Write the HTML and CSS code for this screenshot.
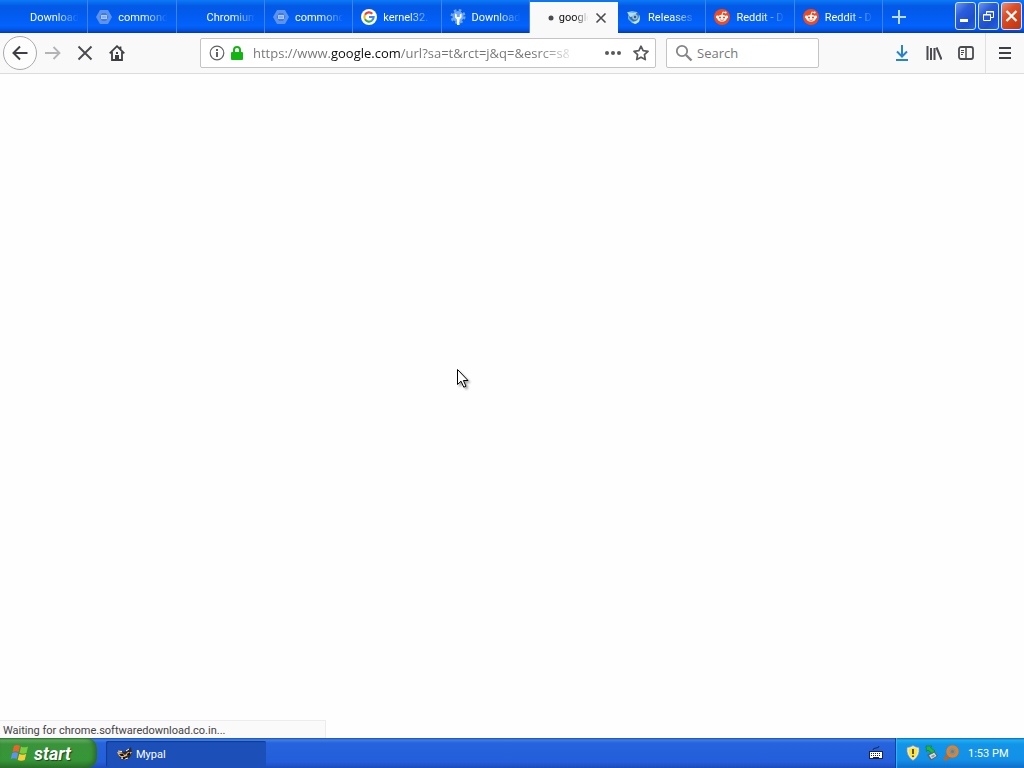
FILE: index.html
```html
<!DOCTYPE html>
<html lang="en">
<head>
  <meta charset="UTF-8">
  <meta name="viewport" content="width=device-width, initial-scale=1.0">
  <title>Mypal</title>
  <link rel="stylesheet" href="styles.css">
</head>
<body>
  <svg class="defs" aria-hidden="true">
    <symbol id="hexagon" viewBox="0 0 16 16">
      <path d="M4 1h8l4 7-4 7H4L0 8z" fill="#5c93ee"/>
      <path d="M6 4h4l2.500 4L10 12H6L3.500 8z" fill="#4379dd"/>
      <path d="M5 6h6v4H5z" fill="#a9c9fb"/>
      <path d="M6 8h4" stroke="#5c8fe8"/>
    </symbol>
    <symbol id="reddit" viewBox="0 0 16 16">
      <circle cx="8" cy="8" r="8" fill="#f04a20"/>
      <circle cx="3.300" cy="8" r="1.400" fill="#fff"/>
      <circle cx="12.700" cy="8" r="1.400" fill="#fff"/>
      <ellipse cx="8" cy="9.200" rx="4.800" ry="3.500" fill="#fff"/>
      <path d="M8 6l.800-3 2.600.600" fill="none" stroke="#fff" stroke-width=".9"/>
      <circle cx="11.600" cy="3.600" r="1" fill="#fff"/>
      <circle cx="6" cy="8.500" r="1.100" fill="#f04a20"/>
      <circle cx="10" cy="8.500" r="1.100" fill="#f04a20"/>
      <path d="M6 10.800q2 1.200 4 0" fill="none" stroke="#f04a20" stroke-width=".8"/>
    </symbol>
  </svg>

  <header class="titlebar">
    <div class="tabs" role="tablist">
      <button class="tab" role="tab"><span class="favicon"></span><span class="label">Download</span></button>
      <button class="tab" role="tab"><svg class="favicon"><use href="#hexagon"/></svg><span class="label">commond</span></button>
      <button class="tab" role="tab"><span class="favicon"></span><span class="label">Chromium</span></button>
      <button class="tab" role="tab"><svg class="favicon"><use href="#hexagon"/></svg><span class="label">commond</span></button>
      <button class="tab" role="tab">
        <svg class="favicon" viewBox="0 0 16 16">
          <circle cx="8" cy="8" r="8" fill="#fff"/>
          <g fill="none" stroke-width="2.200">
            <path d="M11.300 4.700A4.600 4.600 0 0 0 4 5.700" stroke="#ea4335"/>
            <path d="M4 5.700a4.600 4.600 0 0 0 0 4.600" stroke="#fbbc05"/>
            <path d="M4 10.300a4.600 4.600 0 0 0 7 1.200" stroke="#34a853"/>
            <path d="M11 11.500A4.600 4.600 0 0 0 12.600 8H8" stroke="#4285f4"/>
          </g>
        </svg>
        <span class="label">kernel32.</span>
      </button>
      <button class="tab" role="tab">
        <svg class="favicon" viewBox="0 0 16 16">
          <circle cx="8" cy="7.500" r="5.500" fill="#6fa8f5"/>
          <circle cx="8" cy="7.500" r="6.400" fill="none" stroke="#6fa8f5" stroke-width="2.200" stroke-dasharray="2.600 2.430"/>
          <path d="M5 4.500v4l2 2V16h2.500v-5.500l2-2v-4L9.800 5.500V8h-3V5.500z" fill="#fff"/>
        </svg>
        <span class="label">Download</span>
      </button>
      <button class="tab selected" role="tab" aria-selected="true">
        <svg class="favicon" viewBox="0 0 16 16"><circle cx="13" cy="8" r="2.500" fill="#4a4a4f"/></svg>
        <span class="label">google</span>
        <svg class="close" viewBox="0 0 12 12"><path d="M1.500 1.500l9 9M10.500 1.500l-9 9" stroke="#4a4a4f" stroke-width="1.600"/></svg>
      </button>
      <button class="tab" role="tab">
        <svg class="favicon" viewBox="0 0 16 16">
          <path d="M2 3l4-1 5 1 3 4v4l-4 4-4-1-4-4z" fill="#63b7e6"/>
          <path d="M1 3l5 3 4-3 3 2-1 5-4 3-4-3z" fill="#3d6f9f"/>
          <path d="M1 3l6 1 4-1-2 4-5 1z" fill="#b5def2"/>
          <circle cx="9" cy="8" r="2.800" fill="#8fc3ea"/>
          <circle cx="9" cy="8" r="1.200" fill="#385974"/>
          <path d="M6 13l5-1 3-5-1 6-4 2z" fill="#cbe6dc"/>
        </svg>
        <span class="label">Releases</span>
      </button>
      <button class="tab" role="tab"><svg class="favicon"><use href="#reddit"/></svg><span class="label">Reddit - D</span></button>
      <button class="tab" role="tab"><svg class="favicon"><use href="#reddit"/></svg><span class="label">Reddit - D</span></button>
    </div>
    <button class="new-tab" aria-label="New tab">
      <svg width="14" height="14" viewBox="0 0 14 14"><path d="M7 0v14M0 7h14" stroke="#bcdcff" stroke-width="2"/></svg>
    </button>
    <div class="window-buttons">
      <button class="window-button" aria-label="Minimize">
        <svg width="19" height="26" viewBox="0 0 19 26"><path d="M4 16h8v3H4z" fill="#fff"/></svg>
      </button>
      <button class="window-button" aria-label="Restore">
        <svg width="19" height="26" viewBox="0 0 19 26" fill="none" stroke="#fff">
          <path d="M7.500 11V8.500h7v6H12M7 9h8"/><path d="M4.500 11.500h7v6h-7zM4 12h8"/>
        </svg>
      </button>
      <button class="window-button window-close" aria-label="Close">
        <svg width="19" height="26" viewBox="0 0 19 26"><path d="M4.500 8l10 10M14.500 8l-10 10" stroke="#fff" stroke-width="2.200"/></svg>
      </button>
    </div>
  </header>

  <nav class="toolbar">
    <button class="back" aria-label="Back">
      <svg width="16" height="16" viewBox="0 0 16 16"><path d="M15.500 8H1.500M8 1.500L1.500 8 8 14.500" fill="none" stroke="#3f3f43" stroke-width="2"/></svg>
    </button>
    <button class="tool" aria-label="Forward">
      <svg width="16" height="16" viewBox="0 0 16 16"><path d="M0 8h14.500M8.500 2l6 6-6 6" fill="none" stroke="#b4b4b6" stroke-width="1.800"/></svg>
    </button>
    <button class="tool" aria-label="Stop">
      <svg width="16" height="16" viewBox="0 0 16 16"><path d="M1.500 1.500l13 13M14.500 1.500l-13 13" stroke="#4a4a4f" stroke-width="1.900"/></svg>
    </button>
    <button class="tool" aria-label="Home">
      <svg width="16" height="16" viewBox="0 0 16 16">
        <path d="M.700 8.300L8 1.200l7.300 7.100M3 7v8h10V7M11.500 1.500v3" fill="none" stroke="#3f3f43" stroke-width="1.800"/>
        <path d="M6 15v-5h4v5z" fill="#3f3f43"/><path d="M7 7h2v2H7z" fill="#3f3f43"/>
      </svg>
    </button>
    <span class="spring"></span>
    <div class="urlbar">
      <svg width="16" height="16" viewBox="0 0 16 16">
        <circle cx="8" cy="8" r="6.800" fill="none" stroke="#626266" stroke-width="1.200"/>
        <path d="M7 7h2v5H7zM7 4h2v2H7z" fill="#626266"/>
      </svg>
      <svg width="16" height="16" viewBox="0 0 16 16">
        <path d="M5 8V5a3 3 0 0 1 6 0v3" fill="none" stroke="#12b512" stroke-width="2"/>
        <rect x="2" y="7" width="12" height="8" rx="1" fill="#12b512"/>
      </svg>
      <input class="url" type="text" aria-label="Address" value="https://www.google.com/url?sa=t&amp;rct=j&amp;q=&amp;esrc=s&amp;">
      <button class="url-action" aria-label="Page actions">
        <svg width="16" height="16" viewBox="0 0 16 16" fill="#59595d"><circle cx="2" cy="8" r="2"/><circle cx="8" cy="8" r="2"/><circle cx="14" cy="8" r="2"/></svg>
      </button>
      <button class="url-action" aria-label="Bookmark this page">
        <svg width="16" height="16" viewBox="0 0 16 16"><path d="M8 1.200l2.100 4.500 4.900.600-3.600 3.400.900 4.900L8 12.200l-4.300 2.400.900-4.900L1 6.300l4.900-.600z" fill="none" stroke="#59595d" stroke-width="1.700" stroke-linejoin="round"/></svg>
      </button>
    </div>
    <div class="searchbar">
      <svg width="18" height="18" viewBox="0 0 18 18"><path d="M11 11l5.500 5.500" stroke="#858588" stroke-width="2.400"/><circle cx="7" cy="7" r="5.200" fill="none" stroke="#858588" stroke-width="1.800"/></svg>
      <input class="search" type="text" aria-label="Search" placeholder="Search">
    </div>
    <span class="spring"></span>
    <button class="tool" aria-label="Downloads">
      <svg width="16" height="16" viewBox="0 0 16 16"><path d="M8 0v11M3 6.500l5 5 5-5M2 15h12" fill="none" stroke="#2783cd" stroke-width="2"/></svg>
    </button>
    <button class="tool" aria-label="Library">
      <svg width="16" height="16" viewBox="0 0 16 16"><path d="M1.500 1v14M5 3v12M8.500 3v12M10.500 2.500l5 12" stroke="#4a4a4f" stroke-width="2"/></svg>
    </button>
    <button class="tool" aria-label="Sidebars">
      <svg width="16" height="16" viewBox="0 0 16 16"><rect x="1" y="2" width="14" height="12" rx="2" fill="none" stroke="#4a4a4f" stroke-width="1.800"/><path d="M8 2v12" stroke="#4a4a4f" stroke-width="1.500"/><path d="M3 5.500h3M3 7.500h3M3 9.500h2" stroke="#4a4a4f"/></svg>
    </button>
    <button class="tool menu" aria-label="Open menu">
      <svg width="16" height="16" viewBox="0 0 16 16"><path d="M2 3h12M2 8h12M2 13h12" stroke="#3f3f43" stroke-width="2"/></svg>
    </button>
  </nav>

  <main class="page">
    <svg class="cursor" width="15" height="22" viewBox="0 0 15 22">
      <path d="M1.500 1.500v15l3.500-3.300 2.800 6 2.200-1-2.600-5.700h4.600z" fill="#fff" stroke="#000"/>
    </svg>
    <div class="status">Waiting for chrome.softwaredownload.co.in...</div>
  </main>

  <footer class="taskbar">
    <button class="start">
      <svg width="20" height="18" viewBox="0 0 20 18">
        <path d="M4 2q3-2 6 0L8.500 8q-3-1.500-6 0z" fill="#f0602c"/>
        <path d="M11 2.500q3 1.700 7 0L16.500 9q-3.500 1.500-7 0z" fill="#7ccc3e"/>
        <path d="M2.200 9.200q3-1.700 6 0L6.700 15q-3-1.700-6 0z" fill="#5b92f4"/>
        <path d="M9.200 10q3.500 1.600 7 0L14.700 16q-3.500 1.600-7 0z" fill="#f9cf38"/>
      </svg>
      <span>start</span>
    </button>
    <button class="task">
      <svg width="16" height="16" viewBox="0 0 16 16">
        <path d="M1 4l3 1 3 1 4-2 3-3 1 6-2 4-4 3-5-1-3-4z" fill="#312821"/>
        <path d="M0 6l5 .500L8 9l3-3 4 0-2 3-4 1-3 2-4-2z" fill="#e7b983"/>
        <path d="M2 8l4-.500L7 10H4zM10 8l3-2 .500 3-3 1z" fill="#18120f"/>
        <path d="M1 5l4 .500M9 5l3-2M4 12l4 1 3-1" stroke="#fff"/>
        <circle cx="7" cy="12" r="1.200" fill="#111"/>
      </svg>
      <span>Mypal</span>
    </button>
    <button class="keyboard" aria-label="On-screen keyboard">
      <svg width="14" height="14" viewBox="0 0 14 14">
        <path d="M4 4q0-2 3-2t3-2" fill="none" stroke="#12265c"/>
        <rect x=".5" y="5.500" width="13" height="7" fill="#fff" stroke="#17224c"/>
        <path d="M2 7.500h10M2 9.500h10" stroke="#222" stroke-dasharray="1 1"/><path d="M4 11.500h6" stroke="#222"/>
      </svg>
    </button>
    <div class="tray">
      <svg width="16" height="16" viewBox="0 0 16 16">
        <path d="M8 .500q3 2 6 2Q15 11 8 15.500 1 11 2 2.500q3 0 6-2z" fill="#e9eef0" stroke="#8b959a" stroke-width=".7"/>
        <path d="M8 2.200q2 1.300 4.500 1.600Q13 10.500 8 13.800 3 10.500 3.500 3.800 6 3.500 8 2.200z" fill="#ffe337"/>
        <path d="M8 4v5M8 10.500v1.500" stroke="#372e00" stroke-width="1.600"/>
      </svg>
      <svg width="16" height="16" viewBox="0 0 16 16">
        <path d="M3 10l7-4 4 5-7 4.500z" fill="#56666c"/>
        <path d="M5 10.500l5-3 2.500 3.500-5 3z" fill="#d8e0e2"/>
        <path d="M7 11l3-1.500 1 1.500-3 1.500z" fill="#8a999c"/>
        <path d="M2 1l6 0-1.500 1.500L11 6 8 8.500 4 5 2.500 6.500z" fill="#22b83b" stroke="#11752b" stroke-width=".6"/>
      </svg>
      <svg width="16" height="16" viewBox="0 0 16 16">
        <path d="M6 10l-4.500 5" stroke="#c4631a" stroke-width="3.400"/>
        <circle cx="9.500" cy="6.500" r="4.700" fill="#4f9fcc" stroke="#ee7d1b" stroke-width="3"/>
        <circle cx="9.500" cy="6.500" r="1.500" fill="#b76429"/>
      </svg>
      <time class="clock">1:53 PM</time>
    </div>
  </footer>
</body>
</html>
```
FILE: styles.css
```css
* {
  box-sizing: border-box;
}

body {
  display: flex;
  flex-direction: column;
  min-height: 100vh;
  margin: 0;
  background-color: #fff;
  font-family: Roboto, "Noto Sans", sans-serif;
  font-size: 11px;
}

button {
  padding: 0;
  border: none;
  background: none;
  font-family: inherit;
  font-size: inherit;
}

svg {
  flex: none;
}

.defs {
  position: absolute;
  width: 0;
  height: 0;
}

/* title bar */
.titlebar {
  display: flex;
  height: 33px;
  background: linear-gradient(#0b7af5 0, #0870f2 2px, #0459e4 6px, #025bef 14px, #0263fc 26px, #0253e0 30px, #0239b4 33px);
}

.tabs {
  display: grid;
  grid-template-columns: repeat(10, minmax(0, 1fr));
  flex: 1;
}

.tab {
  display: flex;
  align-items: center;
  gap: 6px;
  min-width: 0;
  padding: 1px 6px 0 8px;
  border-right: 1px solid #3d83f0;
  color: #fff;
}

.favicon {
  flex: none;
  width: 16px;
  height: 16px;
}

.label {
  flex: 1;
  overflow: hidden;
  text-align: left;
  white-space: nowrap;
  -webkit-mask-image: linear-gradient(to right, #000 50%, transparent 95%);
  mask-image: linear-gradient(to right, #000 50%, transparent 95%);
}

.tab.selected {
  gap: 5px;
  margin-top: 2px;
  padding: 0 11px 0 8px;
  border-right: none;
  background-color: #f9f9fa;
  color: #0c0c0d;
}

.close {
  width: 12px;
  height: 12px;
}

.new-tab {
  display: flex;
  align-items: center;
  justify-content: center;
  width: 32px;
}

.window-buttons {
  display: flex;
  align-items: flex-start;
  gap: 2px;
  margin-left: 40px;
  padding: 2px 2px 0 0;
}

.window-button {
  width: 21px;
  height: 28px;
  border: 1px solid #d6e4fb;
  border-radius: 3px;
  background: linear-gradient(135deg, #6b96ef, #2a5cdb 35%, #1c4fcf 70%, #2263e6);
}

.window-button svg {
  display: block;
}

.window-close {
  background: linear-gradient(135deg, #e99078, #dc4f28 35%, #cc3d14 75%, #b23a19);
}

/* navigation toolbar */
.toolbar {
  display: flex;
  align-items: center;
  height: 41px;
  padding-left: 3px;
  border-bottom: 1px solid #dcdcdd;
  background-color: #f9f9fa;
}

.back,
.tool {
  display: flex;
  align-items: center;
  justify-content: center;
  flex: none;
  width: 32px;
  height: 32px;
}

.back {
  width: 34px;
  height: 34px;
  border: 1px solid #aaaaac;
  border-radius: 50%;
  background-color: #fdfdfd;
}

.spring {
  flex: 0 1 67px;
}

.urlbar,
.searchbar {
  display: flex;
  align-items: center;
  min-width: 0;
  height: 30px;
  border: 1px solid #c4c4c5;
  border-radius: 2px;
  background-color: #fff;
}

.urlbar {
  flex: 1;
  gap: 4px;
  padding: 0 6px 0 8px;
}

.searchbar {
  flex: 0 1 153px;
  gap: 4px;
  margin-left: 10px;
  padding: 0 8px;
}

.url,
.search {
  flex: 1;
  min-width: 0;
  padding: 0;
  border: none;
  outline: none;
  background: none;
  color: #737377;
  font-family: "Open Sans", "Noto Sans", sans-serif;
  font-size: 13px;
}

/* the host is darker than the rest and the end fades out */
.url {
  margin: 0 24px 0 4px;
  background: linear-gradient(to right, #737376 77px, #0c0c0d 77px, #0c0c0d 147px, #737376 147px, #737376 285px, transparent 325px);
  -webkit-background-clip: text;
  background-clip: text;
  -webkit-text-fill-color: transparent;
}

.search::placeholder {
  color: #77777a;
  opacity: 1;
}

.url-action {
  display: flex;
  margin-left: 8px;
}

.menu {
  width: 39px;
  height: 40px;
  margin-left: 3px;
  border-left: 1px solid #e0e0e1;
}

/* page */
.page {
  position: relative;
  flex: 1;
  background-color: #fefefe;
}

.cursor {
  position: absolute;
  top: 294px;
  left: 456px;
  filter: drop-shadow(2px 2px 1px rgba(0, 0, 0, 0.35));
}

.status {
  position: absolute;
  bottom: 0;
  left: 0;
  width: 326px;
  height: 18px;
  padding-left: 3px;
  border: solid #ececec;
  border-width: 1px 1px 0 0;
  background-color: #fafafa;
  color: #444;
  line-height: 19px;
}

/* taskbar */
.taskbar {
  display: flex;
  height: 30px;
  background: linear-gradient(#1c4cb5 0, #3b81e9 2px, #2663dc 5px, #245edb 24px, #1c4bb8 30px);
  color: #fff;
}

.start {
  display: flex;
  align-items: center;
  gap: 4px;
  width: 97px;
  padding: 0 0 0 10px;
  border-radius: 0 10px 10px 0;
  background: linear-gradient(#2c762c 0, #5eac5e 2px, #3a933a 6px, #369636 22px, #2b762b 30px);
  box-shadow: inset -3px -1px 4px #2b682b;
  color: #fff;
  font-size: 18px;
  font-style: italic;
  font-weight: bold;
  text-shadow: 1px 1px 1px #1b431b;
}

.task {
  display: flex;
  align-items: center;
  gap: 3px;
  width: 160px;
  height: 26px;
  margin: 3px 0 0 9px;
  padding-left: 11px;
  border-radius: 2px;
  background-color: #1c4fb7;
  box-shadow: inset 1px 1px 1px #123a8c;
  color: #fff;
}

.keyboard {
  display: flex;
  align-items: center;
  margin-left: auto;
  padding-right: 12px;
}

.tray {
  display: flex;
  align-items: center;
  gap: 3px;
  width: 129px;
  padding-left: 9px;
  border-left: 1px solid #0d3f9e;
  background: linear-gradient(#0c59b9 0, #19b3f2 2px, #1394e8 6px, #1290e8 22px, #0e6cc8 30px);
  box-shadow: inset 1px 0 1px #36b8f5;
}

.clock {
  margin-left: 6px;
}
```
